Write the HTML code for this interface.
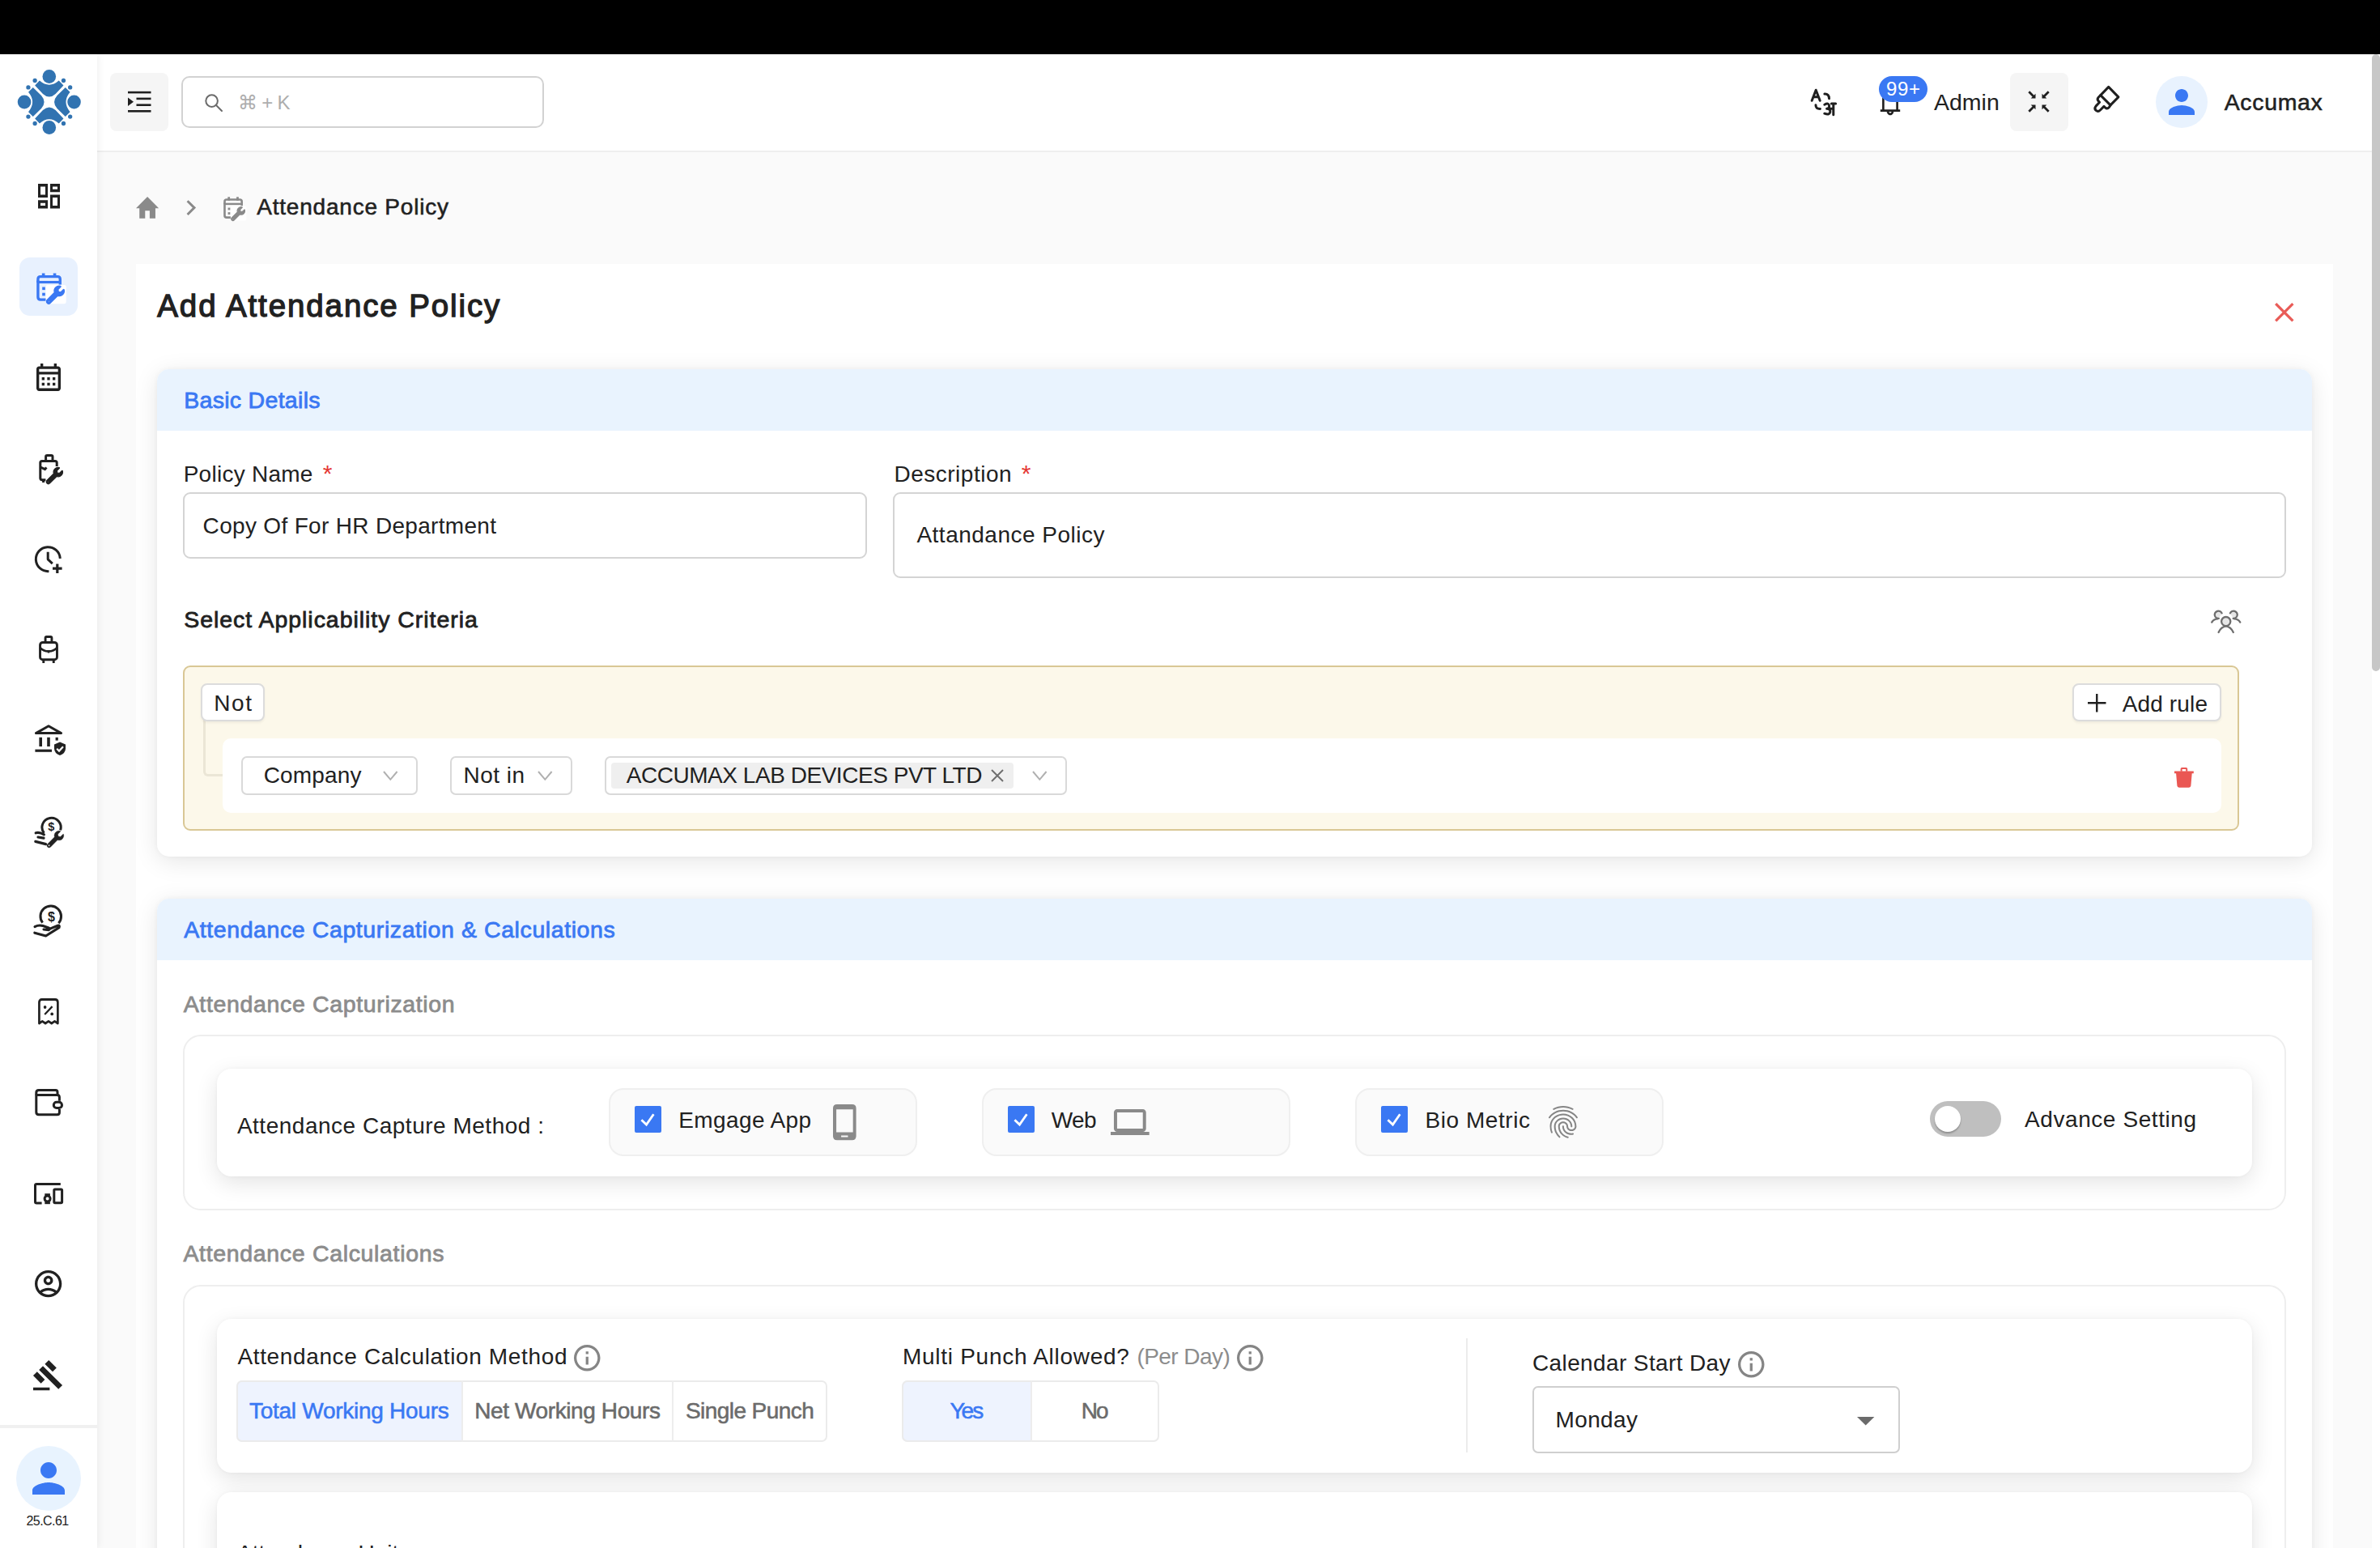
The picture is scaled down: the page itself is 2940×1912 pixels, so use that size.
<!DOCTYPE html>
<html lang="en"><head><meta charset="utf-8"><title>Attendance Policy</title>
<style>
html,body{margin:0;padding:0;}
body{width:2940px;height:1912px;overflow:hidden;position:relative;background:#fafafa;font-family:"Liberation Sans","DejaVu Sans",sans-serif;color:#212121;}
.a{position:absolute;box-sizing:border-box;}
.t{position:absolute;white-space:nowrap;line-height:1;}
svg{position:absolute;overflow:visible;}
.card{background:#fff;border-radius:15px;box-shadow:0 6px 30px rgba(0,0,0,.10),0 0 6px rgba(0,0,0,.04);}
.hd{background:#e9f3fe;border-radius:15px 15px 0 0;}
.ol{border:2px solid #eeeeee;border-radius:22px;background:#fff;}
.in{border:2px solid #d4d4d4;border-radius:9px;background:#fff;}
.sel{border:2px solid #d9d9d9;border-radius:7px;background:#fff;}
.cb{background:#3a78f3;border-radius:2px;}
.opt{background:#fafafa;border:2px solid #efefef;border-radius:18px;}
</style></head><body>
<div class="a" style="left:0;top:0;width:2940px;height:67px;background:#000;"></div>
<div class="a" style="left:120px;top:67px;width:2820px;height:121px;background:#fff;border-bottom:2px solid #eeeeee;"></div>
<div class="a" style="left:168px;top:326px;width:2714px;height:1700px;background:#fff;"></div>
<div class="a" style="left:0;top:67px;width:120px;height:1845px;background:#fff;box-shadow:2px 0 8px rgba(0,0,0,.06);"></div>
<div class="a" style="left:2930px;top:67px;width:10px;height:1845px;background:#fff;"></div>
<div class="a" style="left:2930px;top:67px;width:10px;height:762px;background:#c7c7c7;border-radius:5px;"></div>
<svg style="left:12.2px;top:75.8px;" width="97.6" height="100.0" viewBox="-50 -50 100 100" preserveAspectRatio="none" ><g fill="#3173b1"><g transform="rotate(0)"><path d="M-12.2,-26.4 Q0,-16 12.2,-26.4 L18.1,-20.5 L8,-10 Q0,-2.8 -8,-10 L-18.1,-20.5 Z"/><circle cx="0" cy="-31.5" r="8.5"/><circle cx="-18.1" cy="-26.5" r="2.7"/><circle cx="18.1" cy="-26.5" r="2.7"/></g><g transform="rotate(90)"><path d="M-12.2,-26.4 Q0,-16 12.2,-26.4 L18.1,-20.5 L8,-10 Q0,-2.8 -8,-10 L-18.1,-20.5 Z"/><circle cx="0" cy="-31.5" r="8.5"/><circle cx="-18.1" cy="-26.5" r="2.7"/><circle cx="18.1" cy="-26.5" r="2.7"/></g><g transform="rotate(180)"><path d="M-12.2,-26.4 Q0,-16 12.2,-26.4 L18.1,-20.5 L8,-10 Q0,-2.8 -8,-10 L-18.1,-20.5 Z"/><circle cx="0" cy="-31.5" r="8.5"/><circle cx="-18.1" cy="-26.5" r="2.7"/><circle cx="18.1" cy="-26.5" r="2.7"/></g><g transform="rotate(270)"><path d="M-12.2,-26.4 Q0,-16 12.2,-26.4 L18.1,-20.5 L8,-10 Q0,-2.8 -8,-10 L-18.1,-20.5 Z"/><circle cx="0" cy="-31.5" r="8.5"/><circle cx="-18.1" cy="-26.5" r="2.7"/><circle cx="18.1" cy="-26.5" r="2.7"/></g></g></svg>
<div class="a" style="left:136px;top:90px;width:72px;height:72px;background:#f5f5f5;border-radius:8px;"></div>
<svg style="left:158.0px;top:112.0px;" width="29.0" height="27.0" viewBox="0 0 29 27" preserveAspectRatio="none" ><g fill="#1f1f1f"><rect x="0" y="0.8" width="28.5" height="2.6"/><rect x="10.5" y="8.6" width="18" height="2.6"/><rect x="10.5" y="16.4" width="18" height="2.6"/><rect x="0" y="24" width="28.5" height="2.6"/><path d="M0 8.6 L7 13.8 L0 19 Z"/></g></svg>
<div class="a in" style="left:224px;top:94px;width:448px;height:64px;border-color:#d2d2d2;border-radius:10px;"></div>
<svg style="left:253.0px;top:115.5px;" width="22.0" height="21.5" viewBox="0 0 22 21.5" preserveAspectRatio="none" ><g fill="none" stroke="#6b6b6b" stroke-width="2"><circle cx="8.6" cy="8.6" r="7.3"/><path d="M13.8 13.8 L21 21" stroke-linecap="round"/></g></svg>
<span class="t" style="left:294.0px;top:114.9px;font-size:24px;letter-spacing:0.00px;color:#adadad;letter-spacing:-0.7px;">⌘ + K</span>
<svg style="left:2235.5px;top:109.0px;" width="32.0" height="34.5" viewBox="0 0 32 34.5" preserveAspectRatio="none" ><g fill="none" stroke="#1f1f1f" stroke-width="3" stroke-linecap="round" stroke-linejoin="round">
<path d="M2.2 15.300 L7.2 2.200 L12.2 15.300 M4.400 10.800 H10"/>
<path d="M17.900 7.100 Q23.400 6.700 23.500 12.800"/><path d="M7 20.800 Q6.800 25.500 12.400 25.400"/>
<path d="M17.800 20.300 Q23 17.300 23.600 21.600 Q24 24.800 20.600 25.200 Q25.400 25.500 24.800 29.400 Q23.800 33.600 17.800 31.200 M22.500 25.300 H28.800 M28.800 19 V32.800 M26.400 18.900 H31.600"/></g></svg>
<svg style="left:2322.0px;top:118.0px;" width="26.0" height="24.0" viewBox="0 0 26 24" preserveAspectRatio="none" ><g fill="none" stroke="#1f1f1f" stroke-width="2.6"><path d="M4.4 18.4 V0 M21.6 18.4 V0 M0.8 18.6 H25.2"/><path d="M9.6 20 Q13 26 16.4 20"/></g></svg>
<div class="a" style="left:2321px;top:94px;width:60px;height:32px;background:#3a78f3;border-radius:16px;"></div>
<span class="t" style="left:2330.0px;top:98.2px;font-size:24px;letter-spacing:0.64px;color:#fff;">99+</span>
<span class="t" style="left:2389.0px;top:111.7px;font-size:28.5px;letter-spacing:0.00px;color:#212121;">Admin</span>
<div class="a" style="left:2483px;top:90px;width:72px;height:72px;background:#f5f5f5;border-radius:8px;"></div>
<svg style="left:2505.1px;top:112.2px;" width="27.0" height="27.0" viewBox="-13.5 -13.5 27 27" preserveAspectRatio="none" ><g transform="rotate(0)"><path d="M-12.2 -12.2 L-6 -6" stroke="#1f1f1f" stroke-width="2.7" fill="none"/><path d="M-4 -9.800 V-4 H-9.800 Z" fill="#1f1f1f"/></g><g transform="rotate(90)"><path d="M-12.2 -12.2 L-6 -6" stroke="#1f1f1f" stroke-width="2.7" fill="none"/><path d="M-4 -9.800 V-4 H-9.800 Z" fill="#1f1f1f"/></g><g transform="rotate(180)"><path d="M-12.2 -12.2 L-6 -6" stroke="#1f1f1f" stroke-width="2.7" fill="none"/><path d="M-4 -9.800 V-4 H-9.800 Z" fill="#1f1f1f"/></g><g transform="rotate(270)"><path d="M-12.2 -12.2 L-6 -6" stroke="#1f1f1f" stroke-width="2.7" fill="none"/><path d="M-4 -9.800 V-4 H-9.800 Z" fill="#1f1f1f"/></g></svg>
<svg style="left:2586.0px;top:104.6px;" width="33.5" height="34.2" viewBox="0 0 33.5 33.5" preserveAspectRatio="none" ><g fill="none" stroke="#1f1f1f" stroke-width="3" stroke-linejoin="round" stroke-linecap="round">
<path d="M18.700 2.400 L30.900 14.500 L21 24.400 L8.800 12.300 Z"/>
<path d="M8.800 12.300 L6.200 15 Q4 17.400 6.400 19.600 L7.600 20.800 L3 25.600 Q0.600 28.400 3.200 30.800 Q5.800 33 8.400 30.400 L13 25.800 L14.600 27.400 Q17 29.600 19.400 27 L21 24.400"/></g></svg>
<div class="a" style="left:2663px;top:94px;width:64px;height:64px;background:#e8f2fe;border-radius:50%;"></div>
<svg style="left:2679.0px;top:110.0px;" width="32.0" height="32.0" viewBox="4 4 16 16" preserveAspectRatio="none" ><path fill="#3a78f3" d="M12 12c2.21 0 4-1.79 4-4s-1.790-4-4-4-4 1.790-4 4 1.790 4 4 4zm0 2c-2.670 0-8 1.340-8 4v2h16v-2c0-2.660-5.330-4-8-4z"/></svg>
<span class="t" style="left:2747.7px;top:112.2px;font-size:28.5px;letter-spacing:0.65px;color:#212121;-webkit-text-stroke:0.55px #212121;">Accumax</span>
<svg style="left:168.0px;top:242.6px;" width="28.2" height="26.8" viewBox="2 3 20 17" preserveAspectRatio="none" ><path fill="#8a8a8a" d="M10 20v-6h4v6h5v-8h3L12 3 2 12h3v8z"/></svg>
<svg style="left:230.4px;top:246.6px;" width="12.0" height="19.2" viewBox="0 0 12 19.2" preserveAspectRatio="none" ><path d="M1.6 1.2 L10 9.6 L1.6 18" fill="none" stroke="#8a8a8a" stroke-width="3"/></svg>
<svg style="left:275.7px;top:243.2px;" width="27.9" height="28.8" viewBox="0 0 30 31" preserveAspectRatio="none" ><g fill="none" stroke="#8a8a8a" stroke-width="2.8" stroke-linejoin="round">
<path d="M1.6 8 V25 Q1.6 27.6 4.2 27.6 H12"/><path d="M1.6 10 V6.4 Q1.6 3.8 4.2 3.8 H21.8 Q24.4 3.8 24.4 6.4 V12"/><path d="M1.6 9.6 H24.4" stroke-width="2.6"/>
<path d="M7.2 0.4 V5 M18.8 0.4 V5" stroke-width="3"/></g>
<rect x="6" y="14.6" width="3" height="3" fill="#8a8a8a"/><rect x="6" y="20.6" width="3" height="3" fill="#8a8a8a"/>
<rect x="9.6" y="12.4" width="21" height="19.4" rx="2" fill="#fff"/><g transform="translate(10.4,13.6) scale(0.0355)"><path fill="#8a8a8a" stroke="#8a8a8a" stroke-width="34" stroke-linejoin="round" d="M507.73 109.1c-2.24-9.03-13.54-12.09-20.12-5.51l-74.36 74.36-67.88-11.31-11.31-67.88 74.36-74.36c6.62-6.62 3.43-17.9-5.66-20.16-47.38-11.74-99.55.91-136.58 37.93-39.64 39.64-50.55 97.1-34.05 147.2L18.74 402.76c-24.99 24.99-24.99 65.51 0 90.5 24.99 24.99 65.51 24.99 90.5 0l213.21-213.21c50.12 16.71 107.47 5.68 147.37-34.22 37.07-37.07 49.7-89.32 37.91-136.73zM64 472c-13.25 0-24-10.75-24-24 0-13.26 10.75-24 24-24s24 10.74 24 24c0 13.25-10.75 24-24 24z"/></g></svg>
<span class="t" style="left:317.3px;top:242.0px;font-size:28.0px;letter-spacing:0.78px;color:#212121;-webkit-text-stroke:0.55px #212121;">Attendance Policy</span>
<span class="t" style="left:194.3px;top:358.7px;font-size:38.5px;letter-spacing:1.89px;color:#212121;-webkit-text-stroke:1.3px #212121;">Add Attendance Policy</span>
<svg style="left:2810.3px;top:374.3px;" width="23.6" height="23.6" viewBox="0 0 23.6 23.6" preserveAspectRatio="none" ><path d="M1.2 1.2 L22.4 22.4 M22.4 1.2 L1.2 22.4" stroke="#e95c58" stroke-width="3.3" fill="none"/></svg>
<svg style="left:46.5px;top:226.5px;" width="27.0" height="30.5" viewBox="3 3 18 18" preserveAspectRatio="none" ><path fill="#212121" d="M19 5v2h-4V5h4M9 5v6H5V5h4m10 8v6h-4v-6h4M9 17v2H5v-2h4M21 3h-8v6h8V3zM11 3H3v10h8V3zm10 8h-8v10h8V11zm-10 4H3v6h8v-6z"/></svg>
<div class="a" style="left:24px;top:318px;width:72px;height:72px;background:#e8f1fe;border-radius:13px;"></div>
<svg style="left:45.0px;top:337.2px;" width="36.0" height="37.2" viewBox="0 0 30 31" preserveAspectRatio="none" ><g fill="none" stroke="#3a78f3" stroke-width="2.8" stroke-linejoin="round">
<path d="M1.6 8 V25 Q1.6 27.6 4.2 27.6 H12"/><path d="M1.6 10 V6.4 Q1.6 3.8 4.2 3.8 H21.8 Q24.4 3.8 24.4 6.4 V12"/><path d="M1.6 9.6 H24.4" stroke-width="2.6"/>
<path d="M7.2 0.4 V5 M18.8 0.4 V5" stroke-width="3"/></g>
<rect x="6" y="14.6" width="3" height="3" fill="#3a78f3"/><rect x="6" y="20.6" width="3" height="3" fill="#3a78f3"/>
<rect x="9.6" y="12.4" width="21" height="19.4" rx="2" fill="#fff"/><g transform="translate(10.4,13.6) scale(0.0355)"><path fill="#3a78f3" stroke="#3a78f3" stroke-width="34" stroke-linejoin="round" d="M507.73 109.1c-2.24-9.03-13.54-12.09-20.12-5.51l-74.36 74.36-67.88-11.31-11.31-67.88 74.36-74.36c6.62-6.62 3.43-17.9-5.66-20.16-47.38-11.74-99.55.91-136.58 37.93-39.64 39.64-50.55 97.1-34.05 147.2L18.74 402.76c-24.99 24.99-24.99 65.51 0 90.5 24.99 24.99 65.51 24.99 90.5 0l213.21-213.21c50.12 16.71 107.47 5.68 147.37-34.22 37.07-37.07 49.7-89.32 37.91-136.73zM64 472c-13.25 0-24-10.75-24-24 0-13.26 10.75-24 24-24s24 10.74 24 24c0 13.25-10.75 24-24 24z"/></g></svg>
<svg style="left:45.0px;top:449.0px;" width="30.0" height="34.0" viewBox="3 2 18 20" preserveAspectRatio="none" ><path fill="#212121" d="M19 4h-1V2h-2v2H8V2H6v2H5c-1.11 0-1.99.9-1.99 2L3 20c0 1.1.89 2 2 2h14c1.1 0 2-.9 2-2V6c0-1.1-.9-2-2-2zm0 16H5V10h14v10zm0-12H5V6h14v2zM9 14H7v-2h2v2zm4 0h-2v-2h2v2zm4 0h-2v-2h2v2zm-8 4H7v-2h2v2zm4 0h-2v-2h2v2zm4 0h-2v-2h2v2z"/></svg>
<svg style="left:48.0px;top:560.8px;" width="30.0" height="37.0" viewBox="0 0 30 37" preserveAspectRatio="none" ><g fill="none" stroke="#212121" stroke-width="3" stroke-linejoin="round"><path d="M8.6 8.4 V3.2 Q8.6 1.6 10.2 1.6 H15.4 Q17 1.6 17 3.2 V8.4"/><path d="M22.2 15 V10.6 Q22.2 8.4 20 8.4 H4 Q1.8 8.4 1.8 10.6 V29.6 Q1.8 31.8 4 31.8 H8.4"/><path d="M2 16 L7.6 18.6 L9.4 16.4 M5.6 31.8 V35"/></g><g transform="translate(9.2,16.4) scale(0.0395)"><path fill="#212121" stroke="#212121" stroke-width="30" d="M507.73 109.1c-2.24-9.03-13.54-12.09-20.12-5.51l-74.36 74.36-67.88-11.31-11.31-67.88 74.36-74.36c6.62-6.62 3.43-17.9-5.66-20.16-47.38-11.74-99.55.91-136.58 37.93-39.64 39.64-50.55 97.1-34.05 147.2L18.74 402.76c-24.99 24.99-24.99 65.51 0 90.5 24.99 24.99 65.51 24.99 90.5 0l213.21-213.21c50.12 16.71 107.47 5.68 147.37-34.22 37.07-37.07 49.7-89.32 37.91-136.73zM64 472c-13.25 0-24-10.75-24-24 0-13.26 10.75-24 24-24s24 10.74 24 24c0 13.25-10.75 24-24 24z"/></g></svg>
<svg style="left:43.4px;top:673.5px;" width="34.5" height="34.0" viewBox="0 0 34.5 34" preserveAspectRatio="none" ><g fill="none" stroke="#212121" stroke-width="3" stroke-linejoin="round"><path d="M31.300 15.800 A15 15 0 1 0 17.400 31.600"/><path d="M16.200 7.800 V16.800 L21.800 22.200"/><path d="M27.800 22.400 V34 M22 28.200 H33.600" stroke-width="3.200"/></g></svg>
<svg style="left:47.8px;top:785.0px;" width="24.0" height="34.0" viewBox="0 0 25 34" preserveAspectRatio="none" ><g fill="none" stroke="#212121" stroke-width="3" stroke-linejoin="round"><rect x="1.6" y="8.4" width="21.8" height="21.4" rx="3.4"/><path d="M8.4 8.4 V3.2 Q8.4 1.6 10 1.6 H15 Q16.6 1.6 16.6 3.2 V8.4"/><path d="M1.600 14.800 Q5.500 19.400 12.500 19.400 Q19.500 19.400 23.400 14.800 M12.500 19.400 V21.600" stroke-width="2.600"/><path d="M6 30 V34 M19 30 V34"/></g></svg>
<svg style="left:42.8px;top:895.4px;" width="38.0" height="38.0" viewBox="0 0 38 38" preserveAspectRatio="none" ><g fill="none" stroke="#212121" stroke-width="3" stroke-linejoin="round"><path d="M1.4 10.6 L17 1.8 L32.6 10.6 Z"/><path d="M7.200 15.800 V27 M17 15.800 V27" stroke-width="3.600"/><path d="M27.200 15.800 V19.600" stroke-width="3.200"/><path d="M0.400 32.200 H21" stroke-width="3.200"/></g><path fill="#212121" d="M31 21.6 L38 24.4 V29.6 Q38 35.4 31 38 Q24 35.4 24 29.6 V24.4 Z"/><path d="M27.2 29.8 L30 32.6 L35 27.2" fill="none" stroke="#fff" stroke-width="2.2"/></svg>
<svg style="left:43.4px;top:1007.7px;" width="36.0" height="38.5" viewBox="0 0 36 38.5" preserveAspectRatio="none" ><g fill="none" stroke="#212121" stroke-width="3" stroke-linejoin="round"><path d="M11.400 21 A11.600 11.600 0 1 1 31.600 17.400" stroke-width="3"/><path d="M1.200 20.800 Q6 19.600 11.400 22.800 M4 26 L11 27.200 M0.800 31.400 L13.600 34.600" stroke-width="3.200" stroke-linecap="round"/></g><text x="20.2" y="18.4" font-size="14.5" font-weight="700" text-anchor="middle" fill="#212121" font-family="Liberation Sans,sans-serif">$</text><g transform="translate(15,18.200) scale(0.0405)"><path fill="#212121" stroke="#212121" stroke-width="10" d="M507.73 109.1c-2.24-9.03-13.54-12.09-20.12-5.51l-74.36 74.36-67.88-11.31-11.31-67.88 74.36-74.36c6.62-6.62 3.43-17.9-5.66-20.16-47.38-11.74-99.55.91-136.58 37.93-39.64 39.64-50.55 97.1-34.05 147.2L18.74 402.76c-24.99 24.99-24.99 65.51 0 90.5 24.99 24.99 65.51 24.99 90.5 0l213.21-213.21c50.12 16.71 107.47 5.68 147.37-34.22 37.07-37.07 49.7-89.32 37.91-136.73zM64 472c-13.25 0-24-10.75-24-24 0-13.26 10.75-24 24-24s24 10.74 24 24c0 13.25-10.75 24-24 24z"/></g></svg>
<svg style="left:42.0px;top:1117.0px;" width="36.0" height="41.0" viewBox="0 0 36 41" preserveAspectRatio="none" ><g fill="none" stroke="#212121" stroke-width="3" stroke-linejoin="round"><path d="M10.600 22.600 A12.800 12.800 0 1 1 30.400 23.200" stroke-width="3"/><path d="M1 27.6 Q6 25 11 26.6 L18 29 Q20.6 30 18.4 31.6 L12 31 M18.6 30.6 L29.4 26.2 Q32.2 25.6 31 28.6 L14.600 39 L0.800 35.200" stroke-width="3.100" stroke-linecap="round"/></g><text x="21.4" y="20.6" font-size="16" font-weight="700" text-anchor="middle" fill="#212121" font-family="Liberation Sans,sans-serif">$</text></svg>
<svg style="left:47.0px;top:1233.0px;" width="25.8" height="33.0" viewBox="0 0 27 33" preserveAspectRatio="none" ><g fill="none" stroke="#212121" stroke-width="3" stroke-linejoin="round"><path d="M1.5 31 V5 Q1.5 1.5 5 1.5 H22 Q25.500 1.5 25.500 5 V31 L21.5 28.4 L17.5 31 L13.5 28.4 L9.5 31 L5.5 28.4 Z" stroke-width="2.8"/><path d="M8.600 20 L18.4 10.2" stroke-width="2.4"/></g><circle cx="9" cy="11" r="1.900" fill="#212121"/><circle cx="18" cy="19.400" r="1.900" fill="#212121"/></svg>
<svg style="left:43.4px;top:1345.3px;" width="35.0" height="33.2" viewBox="0 0 35 33.2" preserveAspectRatio="none" ><g fill="none" stroke="#212121" stroke-width="3" stroke-linejoin="round"><path d="M1.800 7.400 V4.600 Q1.800 1.600 4.800 1.600 H25.600 Q28 1.600 28 4 V7.200"/><path d="M30.400 14.800 V10.200 Q30.400 7.400 27.600 7.400 H1.800 V28.800 Q1.800 31.800 4.800 31.800 H27.600 Q30.400 31.800 30.400 29 V25"/><rect x="23.300" y="16.300" width="10.200" height="7.200" rx="3.600"/></g></svg>
<svg style="left:42.0px;top:1461.0px;" width="36.0" height="26.4" viewBox="0 0 36 26.400" preserveAspectRatio="none" ><g fill="none" stroke="#212121" stroke-width="3" stroke-linejoin="round"><path d="M32.800 1.400 H3.200 Q1.500 1.400 1.500 3.100 V23.200 Q1.500 24.900 3.200 24.900 H9.600"/><rect x="24.800" y="7.900" width="9.800" height="16.800" rx="1.200"/><circle cx="16.600" cy="19.600" r="3.500"/></g><rect x="13.300" y="13.200" width="6.600" height="2.800" fill="#212121"/><rect x="13.300" y="23.300" width="6.600" height="2.900" fill="#212121"/></svg>
<svg style="left:43.4px;top:1569.3px;" width="33.3" height="33.3" viewBox="2 2 20 20" preserveAspectRatio="none" ><path fill="#212121" d="M12 2C6.480 2 2 6.480 2 12s4.480 10 10 10 10-4.480 10-10S17.520 2 12 2zM7.350 18.500C8.660 17.560 10.260 17 12 17s3.340.56 4.650 1.500c-1.310.94-2.910 1.500-4.650 1.500s-3.340-.56-4.650-1.500zm10.790-1.380C16.450 15.800 14.320 15 12 15s-4.450.8-6.140 2.120C4.700 15.730 4 13.950 4 12c0-4.420 3.580-8 8-8s8 3.580 8 8c0 1.950-.7 3.730-1.860 5.120zM12 6c-1.930 0-3.500 1.570-3.500 3.500S10.070 13 12 13s3.500-1.570 3.500-3.500S13.930 6 12 6zm0 5c-.83 0-1.500-.67-1.500-1.500S11.170 8 12 8s1.500.67 1.500 1.500S12.830 11 12 11z"/></svg>
<svg style="left:41.3px;top:1679.8px;" width="36.0" height="37.2" viewBox="1 1 21.2 22" preserveAspectRatio="none" ><path fill="#212121" d="M1 21h12v2H1zM5.245 8.070l2.830-2.827 14.140 14.142-2.828 2.828zM12.317 1l5.657 5.656-2.830 2.830-5.654-5.660zM3.825 9.485l5.657 5.657-2.828 2.828-5.657-5.657z"/></svg>
<div class="a" style="left:0;top:1760px;width:120px;height:4px;background:#f0f0f0;"></div>
<div class="a" style="left:20px;top:1786px;width:80px;height:80px;background:#e8f3fe;border-radius:50%;"></div>
<svg style="left:40.0px;top:1806.0px;" width="40.0" height="40.0" viewBox="4 4 16 16" preserveAspectRatio="none" ><path fill="#3a78f3" d="M12 12c2.21 0 4-1.79 4-4s-1.790-4-4-4-4 1.790-4 4 1.790 4 4 4zm0 2c-2.670 0-8 1.340-8 4v2h16v-2c0-2.660-5.330-4-8-4z"/></svg>
<span class="t" style="left:32.5px;top:1870.9px;font-size:16px;letter-spacing:-0.56px;color:#212121;">25.C.61</span>
<div class="a card" style="left:194px;top:456px;width:2662px;height:602px;"></div>
<div class="a hd" style="left:194px;top:456px;width:2662px;height:76px;"></div>
<span class="t" style="left:227.2px;top:479.9px;font-size:28.5px;letter-spacing:0.30px;color:#3a78f3;-webkit-text-stroke:0.8px #3a78f3;">Basic Details</span>
<span class="t" style="left:226.7px;top:572.3px;font-size:28.0px;letter-spacing:0.26px;color:#212121;">Policy Name</span>
<span class="t" style="left:398.8px;top:570.1px;font-size:30px;letter-spacing:0.00px;color:#e53935;">*</span>
<span class="t" style="left:1104.4px;top:572.1px;font-size:28.0px;letter-spacing:0.52px;color:#212121;">Description</span>
<span class="t" style="left:1261.8px;top:570.1px;font-size:30px;letter-spacing:0.00px;color:#e53935;">*</span>
<div class="a in" style="left:226px;top:608px;width:845px;height:82px;"></div>
<span class="t" style="left:250.6px;top:635.7px;font-size:28.0px;letter-spacing:0.32px;color:#212121;">Copy Of For HR Department</span>
<div class="a in" style="left:1103px;top:608px;width:1721px;height:106px;"></div>
<span class="t" style="left:1132.4px;top:647.2px;font-size:28.0px;letter-spacing:0.50px;color:#212121;">Attandance Policy</span>
<span class="t" style="left:227.2px;top:751.2px;font-size:28.5px;letter-spacing:0.96px;color:#212121;-webkit-text-stroke:0.8px #212121;">Select Applicability Criteria</span>
<svg style="left:2731.0px;top:752.5px;" width="37.5" height="29.0" viewBox="0 0 37.5 29" preserveAspectRatio="none" ><g fill="none" stroke="#6e6e6e" stroke-width="2.3" stroke-linecap="round">
<circle cx="18.7" cy="14.6" r="5.6" fill="#e6e6e6"/><path d="M9.6 28 Q12.6 21.4 18.7 20.400 Q24.800 21.400 27.800 28"/>
<path d="M9.8 10.8 A4.6 4.600 0 1 1 13.6 4.400" fill="#e6e6e6"/><path d="M1.2 15.600 Q3.600 11.600 8.600 11.400"/>
<path d="M27.700 10.800 A4.600 4.600 0 1 0 23.900 4.400" fill="#e6e6e6"/><path d="M36.300 15.600 Q33.900 11.600 28.900 11.400"/></g></svg>
<div class="a" style="left:226px;top:822px;width:2540px;height:204px;background:#fcf8ea;border:2px solid #d9c795;border-radius:9px;"></div>
<div class="a" style="left:251px;top:889px;width:26px;height:70px;border-left:3px solid #ebe6d6;border-bottom:3px solid #ebe6d6;border-radius:0 0 0 6px;"></div>
<div class="a" style="left:248px;top:844px;width:79px;height:47px;background:#fff;border:2px solid #dcdcdc;border-radius:8px;box-shadow:0 2px 3px rgba(0,0,0,.05);"></div>
<span class="t" style="left:264.2px;top:855.0px;font-size:28.0px;letter-spacing:1.61px;color:#212121;">Not</span>
<div class="a" style="left:2560px;top:844px;width:184px;height:47px;background:#fff;border:2px solid #dcdcdc;border-radius:8px;box-shadow:0 2px 3px rgba(0,0,0,.05);"></div>
<svg style="left:2579.0px;top:857.2px;" width="22.5" height="22.5" viewBox="0 0 22.500 22.500" preserveAspectRatio="none" ><path d="M11.250 0 V22.500 M0 11.250 H22.500" stroke="#1f1f1f" stroke-width="2.400" fill="none"/></svg>
<span class="t" style="left:2621.7px;top:855.5px;font-size:28.0px;letter-spacing:0.14px;color:#212121;">Add rule</span>
<div class="a" style="left:275px;top:912px;width:2469px;height:92px;background:#fff;border-radius:10px;"></div>
<div class="a sel" style="left:298px;top:934px;width:218px;height:48px;"></div>
<span class="t" style="left:325.7px;top:943.9px;font-size:28.0px;letter-spacing:0.16px;color:#212121;">Company</span>
<svg style="left:472.6px;top:952.0px;" width="18.6" height="12.2" viewBox="0 0 18.6 12.2" preserveAspectRatio="none" ><path d="M1 1 L9.3 10.799999999999999 L17.6 1" fill="none" stroke="#b0b0b0" stroke-width="2"/></svg>
<div class="a sel" style="left:556px;top:934px;width:151px;height:48px;"></div>
<span class="t" style="left:572.6px;top:943.9px;font-size:28.0px;letter-spacing:0.45px;color:#212121;">Not in</span>
<svg style="left:663.8px;top:952.0px;" width="18.6" height="12.2" viewBox="0 0 18.6 12.2" preserveAspectRatio="none" ><path d="M1 1 L9.3 10.799999999999999 L17.6 1" fill="none" stroke="#b0b0b0" stroke-width="2"/></svg>
<div class="a sel" style="left:747px;top:934px;width:571px;height:48px;"></div>
<div class="a" style="left:755px;top:942px;width:497px;height:32px;background:#efefef;border-radius:4px;"></div>
<span class="t" style="left:773.7px;top:944.3px;font-size:28.0px;letter-spacing:-0.46px;color:#212121;">ACCUMAX LAB DEVICES PVT LTD</span>
<svg style="left:1224.0px;top:950.4px;" width="16.0" height="16.0" viewBox="0 0 16 16" preserveAspectRatio="none" ><path d="M1 1 L15 15 M15 1 L1 15" stroke="#6f6f6f" stroke-width="2" fill="none"/></svg>
<svg style="left:1275.0px;top:952.0px;" width="18.6" height="12.2" viewBox="0 0 18.6 12.2" preserveAspectRatio="none" ><path d="M1 1 L9.3 10.799999999999999 L17.6 1" fill="none" stroke="#b0b0b0" stroke-width="2"/></svg>
<svg style="left:2686.2px;top:947.7px;" width="23.8" height="24.7" viewBox="0 0 23.8 24.7" preserveAspectRatio="none" ><path fill="#ea5753" d="M0 4.600 H23.800 V7.200 H21.700 L20.400 22.600 Q20.200 24.700 18 24.700 H5.800 Q3.600 24.700 3.400 22.600 L2.100 7.200 H0 Z"/><path d="M8.600 4.800 V1.800 Q8.600 1 9.400 1 H14.400 Q15.200 1 15.200 1.800 V4.800" fill="none" stroke="#ea5753" stroke-width="2"/></svg>
<div class="a card" style="left:194px;top:1110px;width:2662px;height:900px;"></div>
<div class="a hd" style="left:194px;top:1110px;width:2662px;height:76px;"></div>
<span class="t" style="left:227.2px;top:1133.6px;font-size:28.5px;letter-spacing:0.59px;color:#3a78f3;-webkit-text-stroke:0.8px #3a78f3;">Attendance Capturization &amp; Calculations</span>
<span class="t" style="left:226.7px;top:1225.5px;font-size:28.5px;letter-spacing:0.65px;color:#8c8c8c;-webkit-text-stroke:0.8px #8c8c8c;">Attendance Capturization</span>
<div class="a ol" style="left:226px;top:1278px;width:2598px;height:217px;"></div>
<div class="a card" style="left:268px;top:1320px;width:2514px;height:133px;border-radius:18px;box-shadow:0 8px 28px rgba(0,0,0,.11),0 0 4px rgba(0,0,0,.04);"></div>
<span class="t" style="left:292.9px;top:1376.7px;font-size:28.0px;letter-spacing:0.51px;color:#212121;">Attendance Capture Method :</span>
<div class="a opt" style="left:752px;top:1344px;width:381px;height:84px;"></div>
<div class="a cb" style="left:784px;top:1365.8px;width:33px;height:33px;"></div>
<svg style="left:784.0px;top:1365.8px;" width="33.0" height="33.0" viewBox="0 0 33 33" preserveAspectRatio="none" ><path d="M8.4 17.200 L14.500 23 L23.400 10.200" fill="none" stroke="#fff" stroke-width="2.800"/></svg>
<span class="t" style="left:838.3px;top:1370.2px;font-size:28.0px;letter-spacing:0.39px;color:#212121;">Emgage App</span>
<svg style="left:1028.7px;top:1363.6px;" width="28.6" height="44.2" viewBox="0 0 28.600 44.200" preserveAspectRatio="none" ><path fill="#8a8a8a" fill-rule="evenodd" d="M5 0 H23.600 Q28.600 0 28.600 5 V39.200 Q28.600 44.200 23.600 44.200 H5 Q0 44.200 0 39.200 V5 Q0 0 5 0 Z M4.100 6.200 V34.400 H24.700 V6.200 Z M10.100 38.400 V40.400 H18.500 V38.400 Z"/></svg>
<div class="a opt" style="left:1213px;top:1344px;width:381px;height:84px;"></div>
<div class="a cb" style="left:1245px;top:1365.8px;width:33px;height:33px;"></div>
<svg style="left:1245.0px;top:1365.8px;" width="33.0" height="33.0" viewBox="0 0 33 33" preserveAspectRatio="none" ><path d="M8.4 17.200 L14.500 23 L23.400 10.200" fill="none" stroke="#fff" stroke-width="2.800"/></svg>
<span class="t" style="left:1298.7px;top:1370.3px;font-size:28.0px;letter-spacing:-0.58px;color:#212121;">Web</span>
<svg style="left:1372.0px;top:1369.7px;" width="47.7" height="32.0" viewBox="0 4 24 16" preserveAspectRatio="none" ><path fill="#8a8a8a" d="M20 18c1.100 0 1.990-.9 1.990-2L22 6c0-1.100-.9-2-2-2H4c-1.100 0-2 .9-2 2v10c0 1.100.9 2 2 2H0v2h24v-2h-4zM4 6h16v10H4V6z"/></svg>
<div class="a opt" style="left:1674px;top:1344px;width:381px;height:84px;"></div>
<div class="a cb" style="left:1706px;top:1365.8px;width:33px;height:33px;"></div>
<svg style="left:1706.0px;top:1365.8px;" width="33.0" height="33.0" viewBox="0 0 33 33" preserveAspectRatio="none" ><path d="M8.4 17.200 L14.500 23 L23.400 10.200" fill="none" stroke="#fff" stroke-width="2.800"/></svg>
<span class="t" style="left:1760.5px;top:1370.3px;font-size:28.0px;letter-spacing:0.56px;color:#212121;">Bio Metric</span>
<svg style="left:1912.8px;top:1366.0px;" width="36.2" height="39.8" viewBox="3 2 18.1 20" preserveAspectRatio="none" ><path fill="#858585" d="M17.81 4.47c-.08 0-.16-.02-.23-.06C15.66 3.42 14 3 12.01 3c-1.98 0-3.86.47-5.57 1.41-.24.13-.54.04-.68-.2-.13-.24-.04-.55.2-.68C7.82 2.52 9.86 2 12.01 2c2.13 0 3.99.47 6.03 1.52.25.13.34.43.21.67-.09.18-.26.28-.44.28zM3.5 9.72c-.1 0-.2-.03-.29-.09-.23-.16-.28-.47-.12-.7.99-1.4 2.250-2.5 3.750-3.270C9.980 4.040 14 4.030 17.150 5.650c1.500.77 2.760 1.860 3.750 3.250.16.22.11.54-.12.7-.23.16-.54.11-.7-.12-.9-1.260-2.040-2.250-3.390-2.940-2.870-1.470-6.540-1.470-9.400.01-1.360.7-2.500 1.700-3.400 2.960-.8.14-.23.21-.39.21zm6.250 12.070c-.13 0-.26-.05-.35-.15-.87-.87-1.340-1.430-2.010-2.640-.69-1.230-1.050-2.730-1.050-4.340 0-2.970 2.540-5.390 5.660-5.390s5.660 2.420 5.660 5.390c0 .28-.22.5-.5.5s-.5-.22-.5-.5c0-2.420-2.090-4.390-4.660-4.390-2.570 0-4.660 1.970-4.660 4.390 0 1.440.32 2.770.93 3.850.64 1.150 1.080 1.640 1.850 2.420.19.2.19.51 0 .71-.11.1-.24.15-.37.15zm7.170-1.850c-1.190 0-2.240-.3-3.100-.89-1.490-1.010-2.380-2.650-2.380-4.390 0-.28.22-.5.5-.5s.5.22.5.5c0 1.410.72 2.740 1.940 3.560.71.48 1.540.71 2.540.71.24 0 .64-.03 1.040-.1.27-.05.53.13.58.41.05.27-.13.53-.41.58-.57.11-1.070.12-1.210.12zM14.910 22c-.04 0-.09-.01-.13-.02-1.590-.44-2.630-1.030-3.720-2.100-1.400-1.390-2.170-3.240-2.170-5.220 0-1.620 1.380-2.940 3.080-2.940 1.700 0 3.080 1.320 3.080 2.940 0 1.070.93 1.940 2.080 1.940s2.080-.87 2.080-1.940c0-3.770-3.250-6.830-7.250-6.830-2.840 0-5.440 1.580-6.610 4.030-.39.81-.59 1.760-.59 2.800 0 .78.07 2.010.67 3.610.1.26-.03.55-.29.64-.26.1-.55-.04-.64-.29-.49-1.310-.73-2.610-.73-3.960 0-1.200.23-2.290.68-3.240 1.330-2.790 4.280-4.600 7.510-4.600 4.550 0 8.250 3.510 8.250 7.830 0 1.620-1.380 2.940-3.080 2.940s-3.080-1.320-3.080-2.940c0-1.070-.93-1.940-2.080-1.940s-2.080.87-2.080 1.940c0 1.710.66 3.310 1.870 4.510.95.94 1.860 1.460 3.270 1.850.27.07.42.35.35.61-.05.23-.26.38-.47.38z"/></svg>
<div class="a" style="left:2384px;top:1360px;width:88px;height:44px;background:#bfbfbf;border-radius:22px;"></div>
<div class="a" style="left:2390px;top:1366px;width:32px;height:32px;background:#fff;border-radius:50%;box-shadow:0 2px 2px rgba(0,0,0,.25);"></div>
<span class="t" style="left:2501.0px;top:1369.1px;font-size:28.0px;letter-spacing:0.58px;color:#212121;">Advance Setting</span>
<span class="t" style="left:226.4px;top:1534.3px;font-size:28.5px;letter-spacing:0.67px;color:#8c8c8c;-webkit-text-stroke:0.8px #8c8c8c;">Attendance Calculations</span>
<div class="a ol" style="left:226px;top:1587px;width:2598px;height:500px;"></div>
<div class="a card" style="left:268px;top:1629px;width:2514px;height:190px;border-radius:18px;box-shadow:0 8px 28px rgba(0,0,0,.11),0 0 4px rgba(0,0,0,.04);"></div>
<div class="a card" style="left:268px;top:1843px;width:2514px;height:190px;border-radius:18px;box-shadow:0 8px 28px rgba(0,0,0,.11),0 0 4px rgba(0,0,0,.04);"></div>
<span class="t" style="left:293.4px;top:1662.1px;font-size:28.0px;letter-spacing:0.64px;color:#212121;">Attendance Calculation Method</span>
<svg style="left:709.0px;top:1660.5px;" width="32.5" height="32.5" viewBox="2 2 20 20" preserveAspectRatio="none" ><path fill="#858585" d="M11 7h2v2h-2zm0 4h2v6h-2zm1-9C6.480 2 2 6.480 2 12s4.480 10 10 10 10-4.480 10-10S17.520 2 12 2zm0 18c-4.410 0-8-3.590-8-8s3.590-8 8-8 8 3.590 8 8-3.590 8-8 8z"/></svg>
<div class="a" style="left:292px;top:1705px;width:279px;height:76px;background:#eef3fe;border-radius:7px 0 0 7px;"></div>
<div class="a" style="left:292px;top:1705px;width:730px;height:76px;border:2px solid #ebebeb;border-radius:7px;"></div>
<div class="a" style="left:570px;top:1705px;width:2px;height:76px;background:#ededed;"></div>
<div class="a" style="left:830px;top:1705px;width:2px;height:76px;background:#ededed;"></div>
<span class="t" style="left:308.0px;top:1728.9px;font-size:28.0px;letter-spacing:-0.27px;color:#3a78f3;-webkit-text-stroke:0.55px #3a78f3;">Total Working Hours</span>
<span class="t" style="left:586.2px;top:1728.9px;font-size:28.0px;letter-spacing:-0.39px;color:#6b6b6b;-webkit-text-stroke:0.55px #6b6b6b;">Net Working Hours</span>
<span class="t" style="left:847.0px;top:1728.9px;font-size:28.0px;letter-spacing:-0.57px;color:#6b6b6b;-webkit-text-stroke:0.55px #6b6b6b;">Single Punch</span>
<span class="t" style="left:1115.0px;top:1662.1px;font-size:28.0px;letter-spacing:0.72px;color:#212121;">Multi Punch Allowed?</span>
<span class="t" style="left:1404.4px;top:1662.1px;font-size:28.0px;letter-spacing:-0.56px;color:#8c8c8c;">(Per Day)</span>
<svg style="left:1527.5px;top:1660.5px;" width="32.5" height="32.5" viewBox="2 2 20 20" preserveAspectRatio="none" ><path fill="#858585" d="M11 7h2v2h-2zm0 4h2v6h-2zm1-9C6.480 2 2 6.480 2 12s4.480 10 10 10 10-4.480 10-10S17.520 2 12 2zm0 18c-4.410 0-8-3.590-8-8s3.590-8 8-8 8 3.590 8 8-3.590 8-8 8z"/></svg>
<div class="a" style="left:1114px;top:1705px;width:160px;height:76px;background:#eef3fe;border-radius:7px 0 0 7px;"></div>
<div class="a" style="left:1114px;top:1705px;width:318px;height:76px;border:2px solid #ebebeb;border-radius:7px;"></div>
<div class="a" style="left:1273px;top:1705px;width:2px;height:76px;background:#ededed;"></div>
<span class="t" style="left:1173.5px;top:1728.9px;font-size:28.0px;letter-spacing:-2.00px;color:#3a78f3;-webkit-text-stroke:0.55px #3a78f3;">Yes</span>
<span class="t" style="left:1335.7px;top:1728.9px;font-size:28.0px;letter-spacing:-2.00px;color:#6b6b6b;-webkit-text-stroke:0.55px #6b6b6b;">No</span>
<div class="a" style="left:1811px;top:1653px;width:2px;height:141px;background:#ececec;"></div>
<span class="t" style="left:1893.0px;top:1670.3px;font-size:28.0px;letter-spacing:0.38px;color:#212121;">Calendar Start Day</span>
<svg style="left:2147.3px;top:1669.0px;" width="32.5" height="32.5" viewBox="2 2 20 20" preserveAspectRatio="none" ><path fill="#858585" d="M11 7h2v2h-2zm0 4h2v6h-2zm1-9C6.480 2 2 6.480 2 12s4.480 10 10 10 10-4.480 10-10S17.520 2 12 2zm0 18c-4.410 0-8-3.590-8-8s3.590-8 8-8 8 3.590 8 8-3.590 8-8 8z"/></svg>
<div class="a in" style="left:1893px;top:1712px;width:454px;height:83px;border-color:#cfcfcf;border-radius:7px;"></div>
<span class="t" style="left:1921.5px;top:1739.6px;font-size:28.0px;letter-spacing:0.38px;color:#212121;">Monday</span>
<svg style="left:2294.2px;top:1749.8px;" width="21.4" height="10.4" viewBox="0 0 21.400 10.400" preserveAspectRatio="none" ><path d="M0 0 H21.400 L10.700 10.400 Z" fill="#6b6b6b"/></svg>
<span class="t" style="left:293.0px;top:1905.3px;font-size:28.0px;letter-spacing:0.00px;color:#212121;">Attendance Unit</span>
</body></html>
